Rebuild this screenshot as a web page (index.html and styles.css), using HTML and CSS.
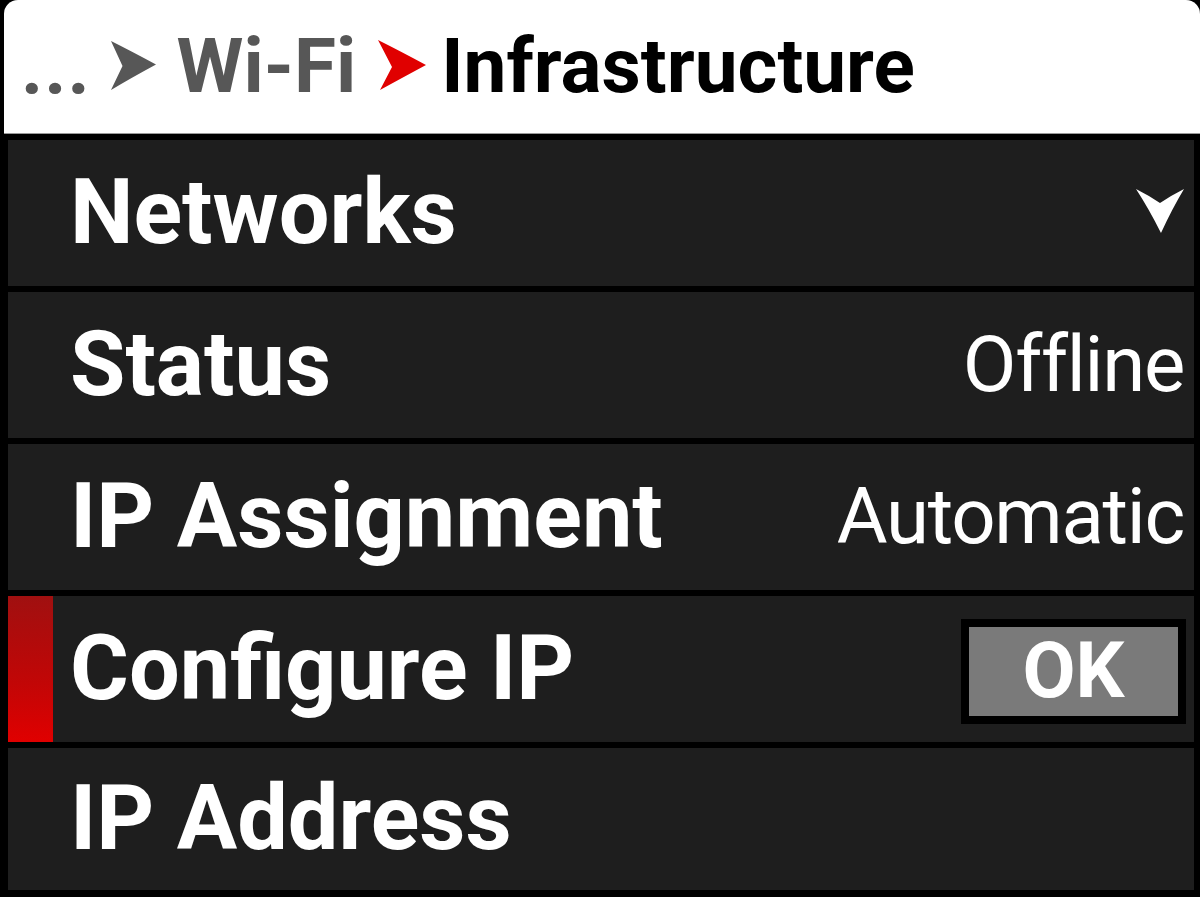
FILE: index.html
```html
<!DOCTYPE html>
<html>
<head>
<meta charset="utf-8">
<link rel="stylesheet" href="styles.css">
</head>
<body>
<div class="screen">
  <header class="crumbs">
    <span class="dots">...</span>
    <svg class="sep" viewBox="0 0 45 49" width="45" height="49"><path d="M0 0 Q20 10 45 23.5 Q20 37 0 49 L11.5 25 Z" fill="#575757"/></svg>
    <span class="crumb">Wi-Fi</span>
    <svg class="sep sep-red" viewBox="0 0 48 50" width="48" height="50"><path d="M0 0 Q22 11 48 25 Q22 39 2 50 L14 27 Z" fill="#e00000"/></svg>
    <span class="current">Infrastructure</span>
  </header>
  <ul class="menu">
    <li class="row">
      <span class="label">Networks</span>
      <svg class="chev" viewBox="0 0 48 44" width="48" height="44"><path d="M0 0 Q12 6 24 14 Q36 6 48 0 Q36 20 25 44 Q13 20 0 0 Z" fill="#fff"/></svg>
    </li>
    <li class="row">
      <span class="label">Status</span>
      <span class="value">Offline</span>
    </li>
    <li class="row">
      <span class="label">IP Assignment</span>
      <span class="value">Automatic</span>
    </li>
    <li class="row row-active">
      <span class="label">Configure IP</span>
      <span class="btn"><span class="btn-face">OK</span></span>
    </li>
    <li class="row row-last">
      <span class="label">IP Address</span>
    </li>
  </ul>
</div>
</body>
</html>
```

FILE: styles.css
```css
html, body {
  margin: 0;
  padding: 0;
  background: #000;
}

.screen {
  width: 1200px;
  height: 897px;
  background: #000;
  display: flex;
  flex-direction: column;
  font-family: Roboto, "Liberation Sans", sans-serif;
  overflow: hidden;
}

.crumbs {
  height: 133px;
  margin-left: 4px;
  background: #fff;
  border-radius: 14px 14px 0 0;
  border-bottom: 1px solid #9a9a9a;
  display: flex;
  align-items: center;
  padding-left: 17px;
  font-weight: 700;
  font-size: 76.5px;
  flex: none;
}

.dots {
  color: #575757;
  letter-spacing: 1px;
  line-height: 1;
  margin-top: 2px;
}

.sep {
  display: block;
  margin-left: 20px;
  margin-top: -2px;
  flex: none;
}

.crumb {
  color: #575757;
  margin-left: 21px;
  line-height: 1;
}

.sep-red {
  margin-left: 22px;
  margin-top: -3px;
}

.current {
  color: #000;
  margin-left: 15px;
  line-height: 1;
}

.menu {
  list-style: none;
  margin: 0;
  padding: 6px 6px 7px 8px;
  display: flex;
  flex-direction: column;
  gap: 6px;
  flex: 1;
}

.row {
  height: 146px;
  background: #1e1e1e;
  display: flex;
  align-items: center;
  justify-content: space-between;
  padding: 0 10px 0 62px;
  position: relative;
  flex: none;
}

.row-last {
  flex: 1;
  height: auto;
}

.row-active::before {
  content: "";
  position: absolute;
  left: 0;
  top: 0;
  bottom: 0;
  width: 45px;
  background: linear-gradient(180deg, #a01010 0%, #c20606 60%, #e00000 100%);
}

.label {
  color: #fff;
  font-weight: 700;
  font-size: 90px;
  line-height: 1;
}

.value {
  color: #fff;
  font-weight: 400;
  font-size: 78px;
  line-height: 1;
  letter-spacing: -1.3px;
}

.chev {
  display: block;
  margin-top: -4px;
}

.btn {
  display: block;
  background: #000;
  padding: 8px;
  margin-right: -2px;
  margin-top: 4px;
}

.btn-face {
  display: flex;
  align-items: center;
  justify-content: center;
  width: 209px;
  height: 89px;
  background: #7a7a7a;
  color: #fff;
  font-weight: 700;
  font-size: 77px;
  line-height: 1;
}
```
